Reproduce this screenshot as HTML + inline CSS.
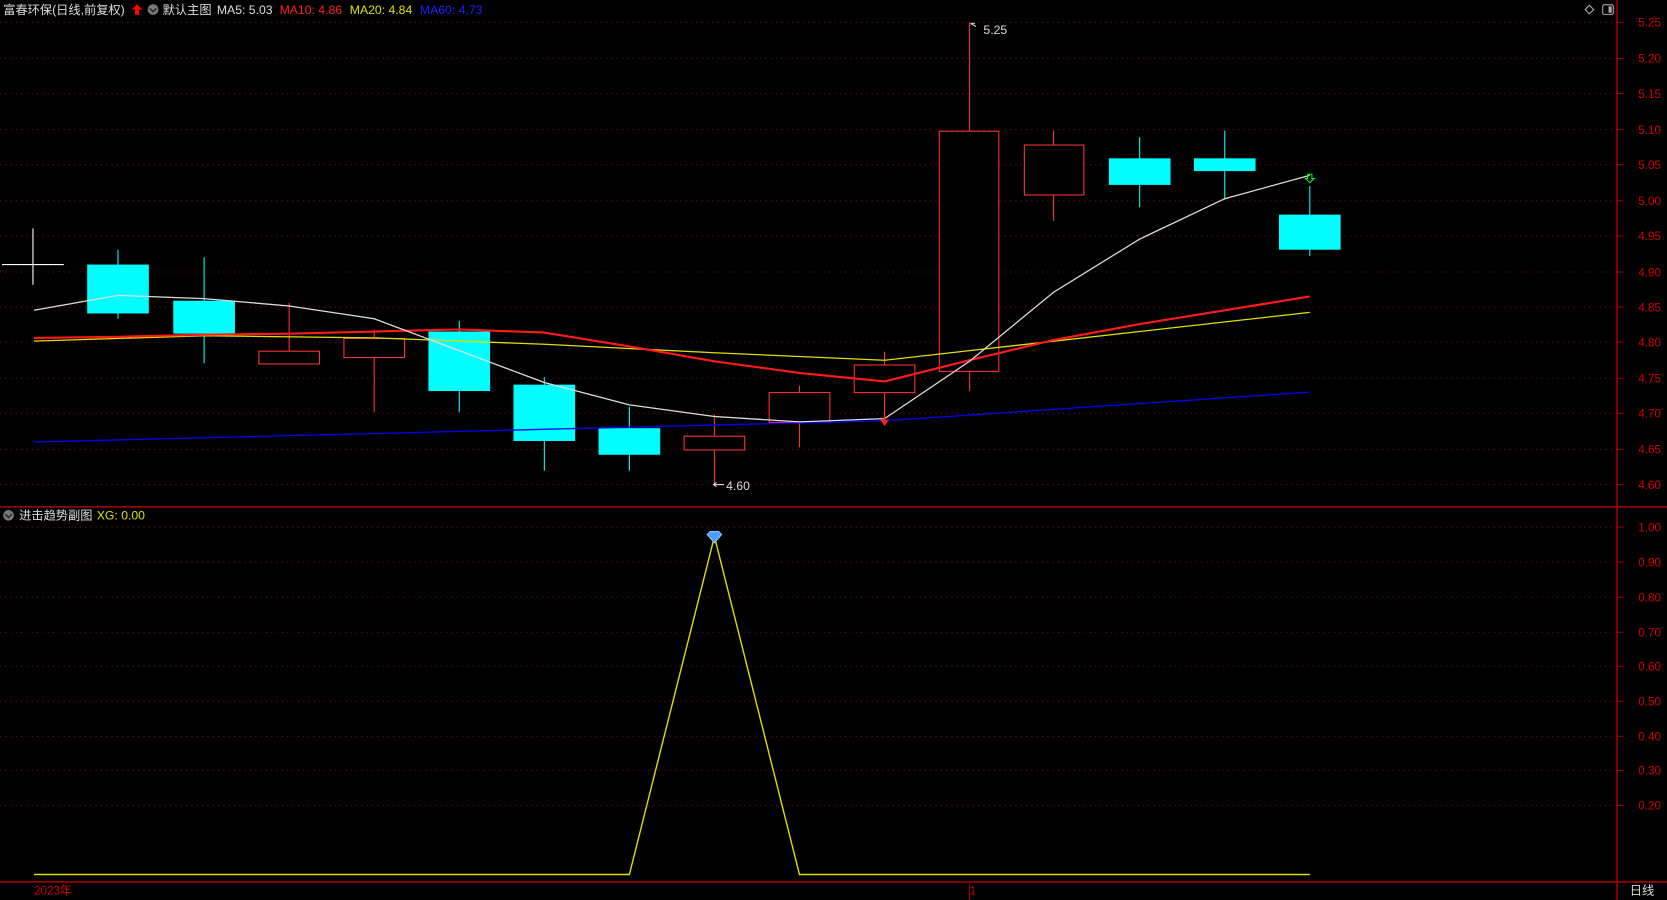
<!DOCTYPE html>
<html><head><meta charset="utf-8"><style>
html,body{margin:0;padding:0;background:#000;width:1667px;height:900px;overflow:hidden}
svg{display:block}
text{font-family:"Liberation Sans","Noto Sans CJK SC",sans-serif}
</style></head><body>
<svg width="1667" height="900" viewBox="0 0 1568 847" preserveAspectRatio="none" xmlns="http://www.w3.org/2000/svg">
<rect width="1568" height="847" fill="#000"/>
<g stroke="#8a0000" stroke-width="1" stroke-dasharray="1,4">
<line x1="0" y1="21" x2="1521" y2="21"/><line x1="0" y1="55" x2="1521" y2="55"/><line x1="0" y1="88" x2="1521" y2="88"/><line x1="0" y1="122" x2="1521" y2="122"/><line x1="0" y1="155" x2="1521" y2="155"/><line x1="0" y1="189" x2="1521" y2="189"/><line x1="0" y1="222" x2="1521" y2="222"/><line x1="0" y1="256" x2="1521" y2="256"/><line x1="0" y1="289" x2="1521" y2="289"/><line x1="0" y1="322" x2="1521" y2="322"/><line x1="0" y1="356" x2="1521" y2="356"/><line x1="0" y1="389" x2="1521" y2="389"/><line x1="0" y1="423" x2="1521" y2="423"/><line x1="0" y1="456" x2="1521" y2="456"/>
<line x1="0" y1="496" x2="1521" y2="496"/><line x1="0" y1="529" x2="1521" y2="529"/><line x1="0" y1="562" x2="1521" y2="562"/><line x1="0" y1="595" x2="1521" y2="595"/><line x1="0" y1="627" x2="1521" y2="627"/><line x1="0" y1="660" x2="1521" y2="660"/><line x1="0" y1="693" x2="1521" y2="693"/><line x1="0" y1="725" x2="1521" y2="725"/><line x1="0" y1="758" x2="1521" y2="758"/>
</g>
<g stroke="#a00000" stroke-width="1.5" fill="none">
<line x1="1521" y1="0" x2="1521" y2="847"/>
<line x1="0" y1="477" x2="1568" y2="477"/>
<line x1="0" y1="830" x2="1568" y2="830"/>
</g>
<g stroke="#a00000" stroke-width="1">
<line x1="1521" y1="21" x2="1527" y2="21"/><line x1="1521" y1="55" x2="1527" y2="55"/><line x1="1521" y1="88" x2="1527" y2="88"/><line x1="1521" y1="122" x2="1527" y2="122"/><line x1="1521" y1="155" x2="1527" y2="155"/><line x1="1521" y1="189" x2="1527" y2="189"/><line x1="1521" y1="222" x2="1527" y2="222"/><line x1="1521" y1="256" x2="1527" y2="256"/><line x1="1521" y1="289" x2="1527" y2="289"/><line x1="1521" y1="322" x2="1527" y2="322"/><line x1="1521" y1="356" x2="1527" y2="356"/><line x1="1521" y1="389" x2="1527" y2="389"/><line x1="1521" y1="423" x2="1527" y2="423"/><line x1="1521" y1="456" x2="1527" y2="456"/>
<line x1="1521" y1="496" x2="1527" y2="496"/><line x1="1521" y1="529" x2="1527" y2="529"/><line x1="1521" y1="562" x2="1527" y2="562"/><line x1="1521" y1="595" x2="1527" y2="595"/><line x1="1521" y1="627" x2="1527" y2="627"/><line x1="1521" y1="660" x2="1527" y2="660"/><line x1="1521" y1="693" x2="1527" y2="693"/><line x1="1521" y1="725" x2="1527" y2="725"/><line x1="1521" y1="758" x2="1527" y2="758"/>
<line x1="912" y1="830" x2="912" y2="847"/>
</g>
<g fill="#d00000" font-size="11">
<text x="1541" y="25">5.25</text><text x="1541" y="59">5.20</text><text x="1541" y="92">5.15</text><text x="1541" y="126">5.10</text><text x="1541" y="159">5.05</text><text x="1541" y="193">5.00</text><text x="1541" y="226">4.95</text><text x="1541" y="260">4.90</text><text x="1541" y="293">4.85</text><text x="1541" y="326">4.80</text><text x="1541" y="360">4.75</text><text x="1541" y="393">4.70</text><text x="1541" y="427">4.65</text><text x="1541" y="460">4.60</text>
<text x="1541" y="500">1.00</text><text x="1541" y="533">0.90</text><text x="1541" y="566">0.80</text><text x="1541" y="599">0.70</text><text x="1541" y="631">0.60</text><text x="1541" y="664">0.50</text><text x="1541" y="697">0.40</text><text x="1541" y="729">0.30</text><text x="1541" y="762">0.20</text>
<text x="32" y="842">2023年</text><text x="912" y="842">1</text>
</g>
<text x="1533" y="842" fill="#ddd" font-size="11.5">日线</text>
<g stroke-width="1">
<g stroke="#00ffff"><line x1="111" y1="235" x2="111" y2="300"/><line x1="192" y1="242" x2="192" y2="342"/><line x1="432" y1="302" x2="432" y2="388"/><line x1="512" y1="355" x2="512" y2="443"/><line x1="592" y1="383" x2="592" y2="443"/><line x1="1072" y1="129" x2="1072" y2="195"/><line x1="1152" y1="123" x2="1152" y2="188"/><line x1="1232" y1="175" x2="1232" y2="241"/></g>
<g stroke="#ff3333"><line x1="272" y1="285" x2="272" y2="330"/><line x1="352" y1="310" x2="352" y2="318"/><line x1="352" y1="336" x2="352" y2="388"/><line x1="672" y1="390" x2="672" y2="410"/><line x1="672" y1="423" x2="672" y2="456"/><line x1="752" y1="363" x2="752" y2="369"/><line x1="752" y1="397" x2="752" y2="421"/><line x1="832" y1="331" x2="832" y2="343"/><line x1="832" y1="369" x2="832" y2="397"/><line x1="912" y1="21" x2="912" y2="123"/><line x1="912" y1="349" x2="912" y2="368"/><line x1="991" y1="123" x2="991" y2="136"/><line x1="991" y1="183" x2="991" y2="208"/></g>
<g stroke="#fff"><line x1="2" y1="249" x2="60" y2="249"/><line x1="31" y1="215" x2="31" y2="268"/></g>
</g>
<g fill="#00ffff">
<rect x="82" y="249" width="58" height="46"/><rect x="163" y="283" width="58" height="31"/><rect x="403" y="312" width="58" height="56"/><rect x="483" y="362" width="58" height="53"/><rect x="563" y="403" width="58" height="25"/><rect x="1043" y="149" width="58" height="25"/><rect x="1123" y="149" width="58" height="12"/><rect x="1203" y="202" width="58" height="33"/>
</g>
<g fill="#000" stroke="#ff3333" stroke-width="1">
<rect x="243.5" y="330.5" width="57" height="12"/><rect x="323.5" y="318.5" width="57" height="18"/><rect x="643.5" y="410.5" width="57" height="13"/><rect x="723.5" y="369.5" width="57" height="28"/><rect x="803.5" y="343.5" width="57" height="26"/><rect x="883.5" y="123.5" width="56" height="226"/><rect x="963.5" y="136.5" width="56" height="47"/>
</g>
<polyline fill="none" stroke="#0000ff" stroke-width="1.2" points="32,416 832,396 1232,369"/>
<polyline fill="none" stroke="#e0e000" stroke-width="1.2" points="32,321 192,316 352,318 512,324 672,332 832,339 912,330 1072,312 1232,294"/>
<polyline fill="none" stroke="#ff1a1a" stroke-width="2" points="32,318 111,317 192,315 272,314 352,312 432,310 512,313 592,326 672,340 752,351 832,359 912,339 991,320 1072,305 1152,292 1232,279"/>
<polyline fill="none" stroke="#dddddd" stroke-width="1.2" points="32,292 111,278 192,281 272,288 352,300 432,330 512,360 592,381 672,392 752,397 832,394 912,340 991,275 1072,225 1152,187 1232,165"/>
<path d="M832,401 l-4,-6 h3 v-3 h2 v3 h3z" fill="#ff2020"/>
<path d="M1232,172 l-4,-4 h2 v-4 h4 v4 h2z" fill="none" stroke="#00ff00" stroke-width="1"/>
<g fill="#ddd" font-size="11.5">
<path d="M913,22 l5,3 M913,22 h4" stroke="#ddd" fill="none"/>
<text x="925" y="32">5.25</text>
<path d="M671,456 h10 M671,456 l3,-2 M671,456 l3,2" stroke="#ddd" fill="none"/>
<text x="683" y="461">4.60</text>
</g>
<polyline fill="none" stroke="#e0e000" stroke-width="1.3" points="32,823 592,823 672,505 752,823 1232,823"/>
<path d="M665,503 l3,-3 h8 l3,3 l-7,8z" fill="#4aa0ff" stroke="#bfe0ff" stroke-width="0.6"/>
<g font-size="11.5">
<text x="3" y="13" fill="#ddd">富春环保(日线,前复权)</text>
<path d="M129,4 l-5,5 h3 v5 h4 v-5 h3z" fill="#ff0000"/>
<circle cx="144" cy="9" r="5" fill="#777"/><path d="M141,8 l3,3 l3,-3" stroke="#222" fill="none" stroke-width="1.3"/>
<text x="153" y="13" fill="#ddd">默认主图</text>
<text x="204" y="13" fill="#ddd">MA5: 5.03</text>
<text x="263" y="13" fill="#ff2020">MA10: 4.86</text>
<text x="329" y="13" fill="#e0e000">MA20: 4.84</text>
<text x="395" y="13" fill="#2020ff">MA60: 4.73</text>
<circle cx="8" cy="485" r="5" fill="#777"/><path d="M5,484 l3,3 l3,-3" stroke="#222" fill="none" stroke-width="1.3"/>
<text x="18" y="489" fill="#ddd">进击趋势副图</text>
<text x="91" y="489" fill="#e0e000">XG: 0.00</text>
</g>
<path d="M1495,5 l4,4 l-4,4 l-4,-4z" fill="none" stroke="#aaa"/>
<rect x="1507.5" y="4.5" width="10" height="9" rx="1.5" fill="none" stroke="#aaa"/><rect x="1513" y="6" width="3" height="6" fill="#aaa"/>
</svg>
</body></html>
